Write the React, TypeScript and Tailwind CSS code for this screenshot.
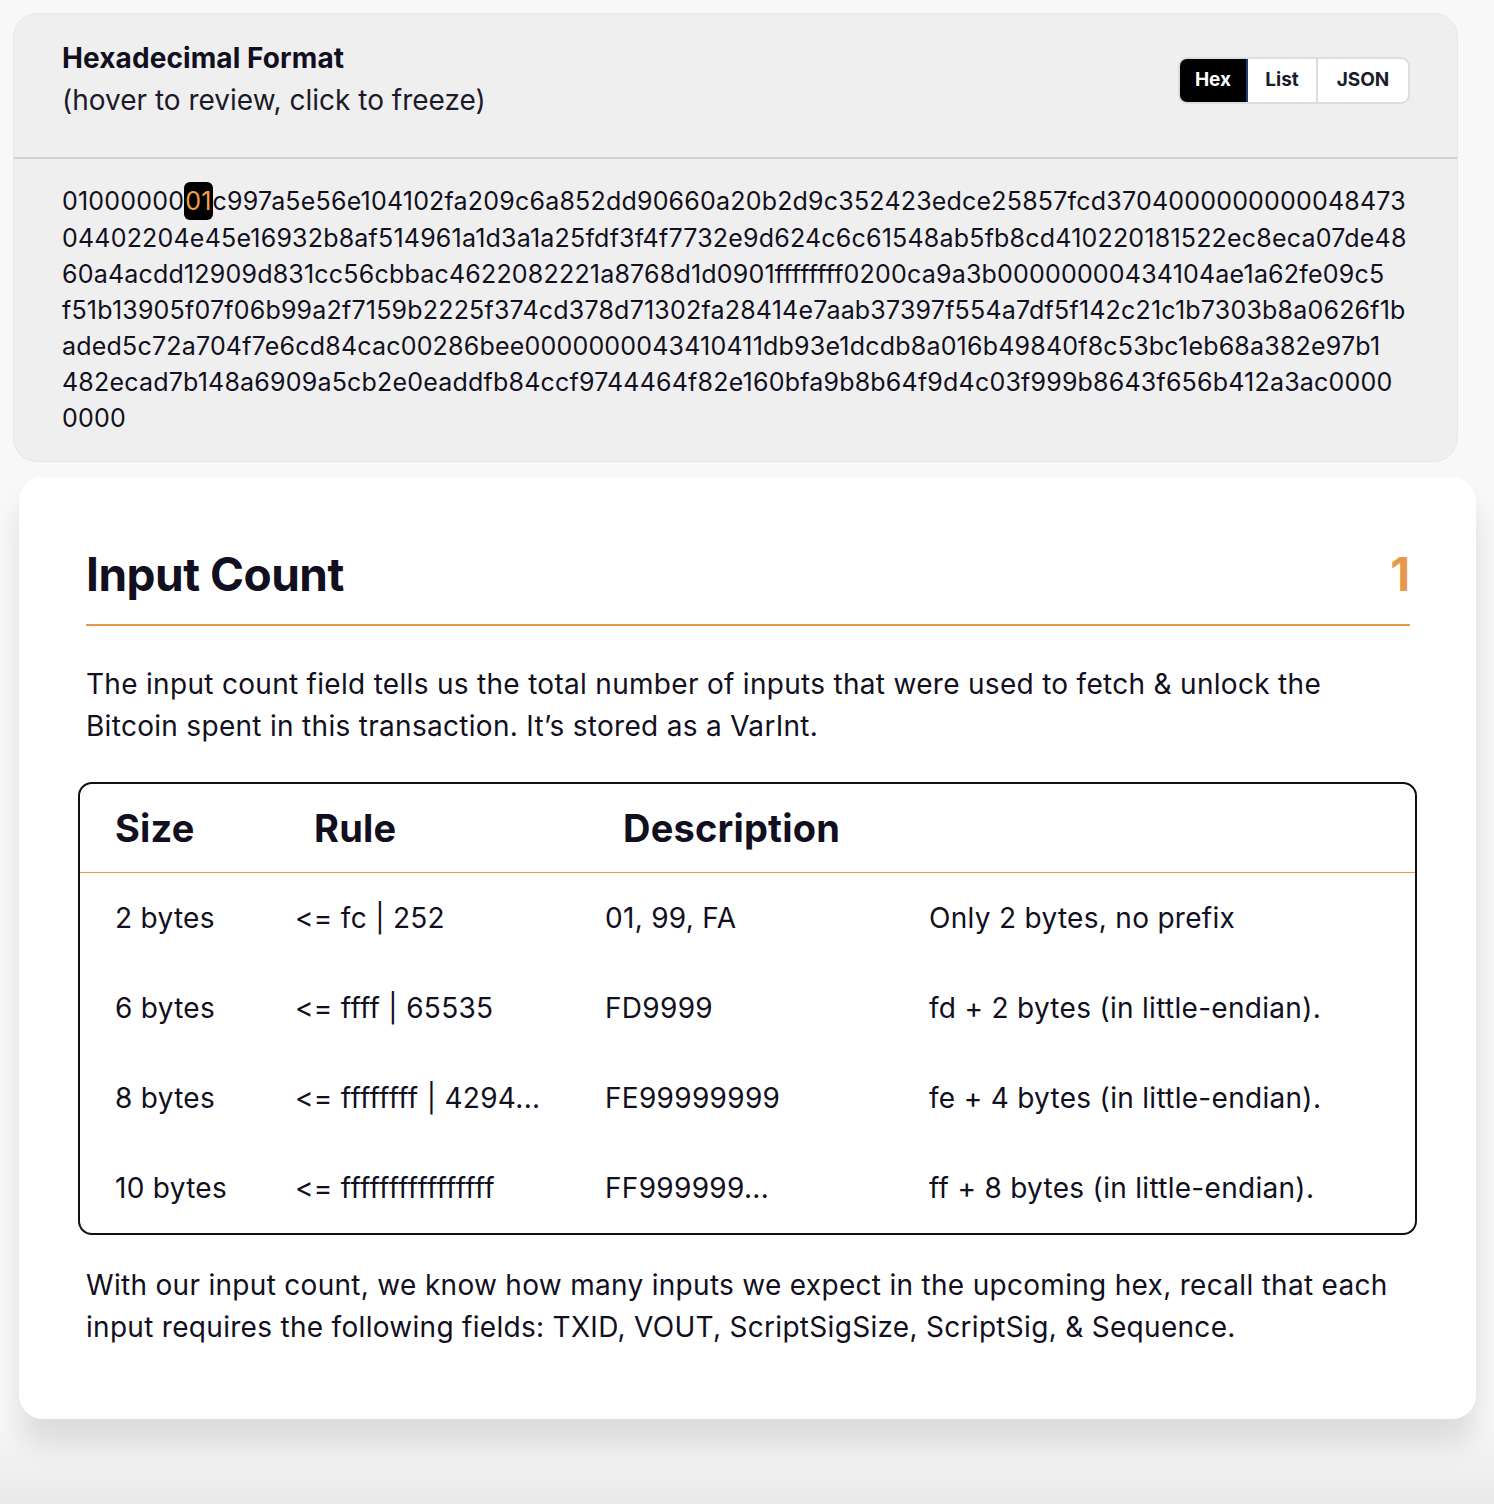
import React from 'react';

const hexLines = [
  'c997a5e56e104102fa209c6a852dd90660a20b2d9c352423edce25857fcd3704000000000048473',
  '04402204e45e16932b8af514961a1d3a1a25fdf3f4f7732e9d624c6c61548ab5fb8cd410220181522ec8eca07de48',
  '60a4acdd12909d831cc56cbbac4622082221a8768d1d0901ffffffff0200ca9a3b00000000434104ae1a62fe09c5',
  'f51b13905f07f06b99a2f7159b2225f374cd378d71302fa28414e7aab37397f554a7df5f142c21c1b7303b8a0626f1b',
  'aded5c72a704f7e6cd84cac00286bee0000000043410411db93e1dcdb8a016b49840f8c53bc1eb68a382e97b1',
  '482ecad7b148a6909a5cb2e0eaddfb84ccf9744464f82e160bfa9b8b64f9d4c03f999b8643f656b412a3ac0000',
  '0000',
];

const rows = [
  ['2 bytes', '<= fc | 252', '01, 99, FA', 'Only 2 bytes, no prefix'],
  ['6 bytes', '<= ffff | 65535', 'FD9999', 'fd + 2 bytes (in little-endian).'],
  ['8 bytes', '<= ffffffff | 4294...', 'FE99999999', 'fe + 4 bytes (in little-endian).'],
  ['10 bytes', '<= ffffffffffffffff', 'FF999999...', 'ff + 8 bytes (in little-endian).'],
];

export default function App() {
  return (
    <div className="min-h-screen bg-[#f8f8f8] font-['Inter',sans-serif] text-[#110f20]">
      <div className="pl-[13px] pt-[13px]">
        {/* hex panel */}
        <div className="w-[1445px] rounded-[24px] border border-[#e7e7e7] bg-[#efefef]">
          <div className="flex items-start justify-between pl-[48px] pr-[47px] pt-[23px] h-[145px] border-b-2 border-[#d2d2d2]">
            <div>
              <h2 className="text-[28px] leading-[42px] font-bold tracking-[0.1px]">Hexadecimal Format</h2>
              <p className="text-[28px] leading-[42px] text-[#1c1a2a]">(hover to review, click to freeze)</p>
            </div>
            <div className="mt-[20px] flex h-[47px] overflow-hidden rounded-[9px] border-2 border-[#dadde3] bg-white text-[19px] font-bold">
              <button className="w-[70px] -ml-[2px] -my-[2px] h-[47px] rounded-l-[9px] border-2 border-[#1e3a6a] bg-black text-white">Hex</button>
              <button className="w-[70px] border-r-2 border-[#dadde3] text-[#1a1c2c]">List</button>
              <button className="w-[90px] text-[#1a1c2c]">JSON</button>
            </div>
          </div>
          <div className="pl-[48px] pt-[23px] pb-[25px] text-[25px] leading-[36px] tracking-[0.2px]">
            <div>
              01000000
              <span className="inline-block rounded-[6px] bg-black px-[1px] leading-[38px] text-[#f0a040]">01</span>
              {hexLines[0]}
            </div>
            {hexLines.slice(1).map((l, i) => (
              <div key={i}>{l}</div>
            ))}
          </div>
        </div>
      </div>

      {/* explanation card */}
      <div className="relative z-10 ml-[19px] mt-[15px] w-[1457px] rounded-[24px] bg-white pl-[67px] pr-[66px] pt-[69px] pb-[71px] shadow-[0_24px_28px_rgba(0,0,0,0.11)]">
        <div className="flex items-center justify-between border-b-2 border-[#e8984a] pb-[22px]">
          <h1 className="text-[46px] leading-[56px] font-bold tracking-[-0.5px]">Input Count</h1>
          <span className="text-[46px] leading-[56px] font-bold text-[#e8984a]">1</span>
        </div>
        <p className="mt-[37px] text-[28px] leading-[42px] tracking-[0.3px]">
          The input count field tells us the total number of inputs that were used to fetch &amp; unlock the
          <br />
          Bitcoin spent in this transaction. It’s stored as a VarInt.
        </p>

        <div className="mt-[35px] -ml-[8px] -mr-[7px] rounded-[14px] border-2 border-[#111]">
          <div className="flex h-[89px] items-center border-b border-[#e8984a] pl-[35px] text-[38px] font-bold tracking-[0.2px]">
            <div className="w-[199px]">Size</div>
            <div className="w-[309px]">Rule</div>
            <div>Description</div>
          </div>
          {rows.map((r, i) => (
            <div key={i} className="flex h-[90px] items-center pl-[35px] text-[28px] tracking-[0.3px]">
              <div className="w-[180px]">{r[0]}</div>
              <div className="w-[310px]">{r[1]}</div>
              <div className="w-[324px]">{r[2]}</div>
              <div>{r[3]}</div>
            </div>
          ))}
        </div>

        <p className="mt-[29px] text-[28px] leading-[42px] tracking-[0.3px]">
          With our input count, we know how many inputs we expect in the upcoming hex, recall that each
          <br />
          input requires the following fields: TXID, VOUT, ScriptSigSize, ScriptSig, &amp; Sequence.
        </p>
      </div>
      <div className="h-[86px] bg-gradient-to-b from-[#f8f8f8] to-[#e9e9e9]" />
    </div>
  );
}
